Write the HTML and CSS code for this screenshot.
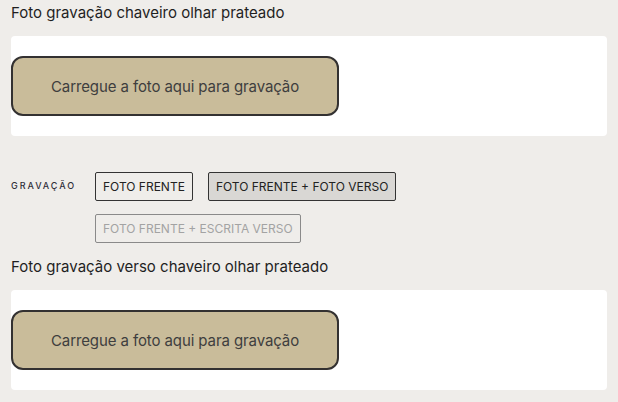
FILE: index.html
```html
<!DOCTYPE html>
<html lang="pt">
<head>
<meta charset="utf-8">
<link rel="stylesheet" href="styles.css">
</head>
<body>
<div class="page">
  <div class="field">
    <div class="field-title">Foto gravação chaveiro olhar prateado</div>
    <div class="upload-box">
      <button class="upload-btn">Carregue a foto aqui para gravação</button>
    </div>
  </div>

  <div class="option-row">
    <div class="option-label">GRAVAÇÃO</div>
    <div class="option-list">
      <button class="opt">FOTO FRENTE</button>
      <button class="opt opt-selected">FOTO FRENTE + FOTO VERSO</button>
      <button class="opt opt-disabled">FOTO FRENTE + ESCRITA VERSO</button>
    </div>
  </div>

  <div class="field field-second">
    <div class="field-title">Foto gravação verso chaveiro olhar prateado</div>
    <div class="upload-box">
      <button class="upload-btn">Carregue a foto aqui para gravação</button>
    </div>
  </div>
</div>
</body>
</html>
```

FILE: styles.css
```css
html, body {
  margin: 0;
  padding: 0;
  background: #efedea;
}
body {
  font-family: "Inter", "Lato", sans-serif;
  color: #222;
}
.page {
  padding: 4px 11px 0 11px;
}
.field-title {
  font-size: 15px;
  line-height: 18px;
  letter-spacing: 0;
  color: #1f1f1f;
  height: 18px;
}
.upload-box {
  margin-top: 14px;
  background: #ffffff;
  border-radius: 4px;
  padding: 20px 0;
  height: 60px;
}
.upload-btn {
  display: flex;
  align-items: center;
  justify-content: center;
  width: 328px;
  height: 60px;
  box-sizing: border-box;
  border: 2px solid #333131;
  border-radius: 12px;
  background: #c9bc9a;
  font-family: "Inter", "Lato", sans-serif;
  font-size: 15px;
  letter-spacing: -0.1px;
  color: #3e3e3e;
  padding: 0;
}
.option-row {
  display: flex;
  align-items: flex-start;
  margin-top: 36px;
}
.option-label {
  width: 84px;
  flex: none;
  font-size: 9px;
  letter-spacing: 1.95px;
  color: #2f2f3a;
  line-height: 28px;
  font-weight: 500;
}
.option-list {
  display: flex;
  flex-wrap: wrap;
  gap: 13px 15px;
  width: 320px;
}
.opt {
  height: 29px;
  box-sizing: border-box;
  border: 1px solid #333;
  border-radius: 2px;
  background: transparent;
  font-family: "Inter", "Lato", sans-serif;
  font-size: 12px;
  letter-spacing: 0;
  color: #222;
  padding: 0 7px;
}
.opt-selected {
  background: #d9d7d4;
}
.opt-disabled {
  border-color: #8a8a8a;
  color: #a3a3a3;
}
.field-second {
  margin-top: 15px;
}
```
